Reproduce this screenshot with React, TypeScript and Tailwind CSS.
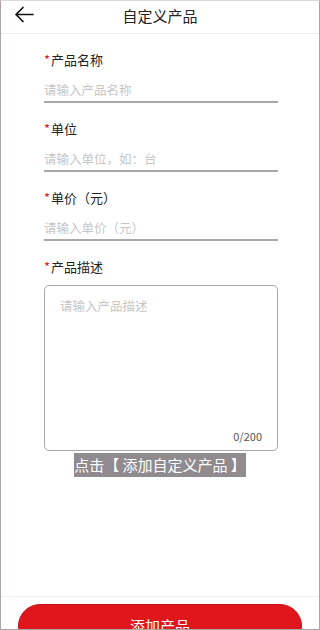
import React from "react";

const CJK = '"Noto Sans CJK SC", "Noto Sans", sans-serif';

function Field({ label, placeholder }: { label: string; placeholder: string }) {
  return (
    <div className="flex flex-col">
      <div className="h-[20px] flex items-center text-[13px] text-[#222222]">
        <span className="text-[#e0161d] text-[13px] mr-[1px]">*</span>
        <span>{label}</span>
      </div>
      <div className="h-[33px] pt-[11px] border-b-2 border-[#a9a9a9]">
        <div className="h-[18px] leading-[18px] text-[12.5px] text-[#c6c6c6]">{placeholder}</div>
      </div>
    </div>
  );
}

export default function App() {
  return (
    <div
      className="w-[320px] h-[630px] overflow-hidden bg-white border border-[#aca4a6] border-t-[#ddd8d8]"
      style={{ fontFamily: CJK }}
    >
      <div className="h-[647px] flex flex-col">
        <div className="h-[33px] shrink-0 relative flex items-center justify-center border-b border-[#efefef]">
          <svg
            className="absolute left-[12px] top-[4px]"
            width="22"
            height="20"
            viewBox="0 0 22 20"
            fill="none"
            stroke="#111"
            strokeWidth="1.7"
            strokeLinecap="round"
            strokeLinejoin="round"
          >
            <path d="M20 9.5H3M10 2.5L3 9.5L10 16.5" />
          </svg>
          <span className="text-[15px] text-[#222222] leading-[20px] mt-[-2px]">自定义产品</span>
        </div>
        <div className="flex-1 flex flex-col">
          <div className="ml-[43px] w-[234px] pt-[16px] flex flex-col gap-[16px]">
            <Field label="产品名称" placeholder="请输入产品名称" />
            <Field label="单位" placeholder="请输入单位，如：台" />
            <Field label="单价（元）" placeholder="请输入单价（元）" />
            <div className="flex flex-col">
              <div className="h-[20px] flex items-center text-[13px] text-[#222222]">
                <span className="text-[#e0161d] text-[13px] mr-[1px]">*</span>
                <span>产品描述</span>
              </div>
              <div className="mt-[8px] h-[166px] rounded-[5px] border border-[#a9a9a9] flex flex-col px-[15px] pt-[11px] pb-[7px]">
                <div className="h-[18px] leading-[18px] text-[12.5px] text-[#c6c6c6]">请输入产品描述</div>
                <div className="flex-1" />
                <div className="self-end text-[11px] leading-[14px] text-[#555555]">0/200</div>
              </div>
            </div>
          </div>
          <div className="mt-[2px] mx-auto w-[172px] h-[24px] bg-[#8f8b8e] flex items-center justify-center text-[15px] text-white leading-[20px]">
            点击【 添加自定义产品 】
          </div>
        </div>
        <div className="shrink-0 border-t border-[#f1eded] pt-[7px] px-[17px]">
          <div className="h-[44px] rounded-full bg-[#e0161d] border border-[#c41218] flex items-center justify-center text-white text-[15px]">
            添加产品
          </div>
        </div>
      </div>
    </div>
  );
}
